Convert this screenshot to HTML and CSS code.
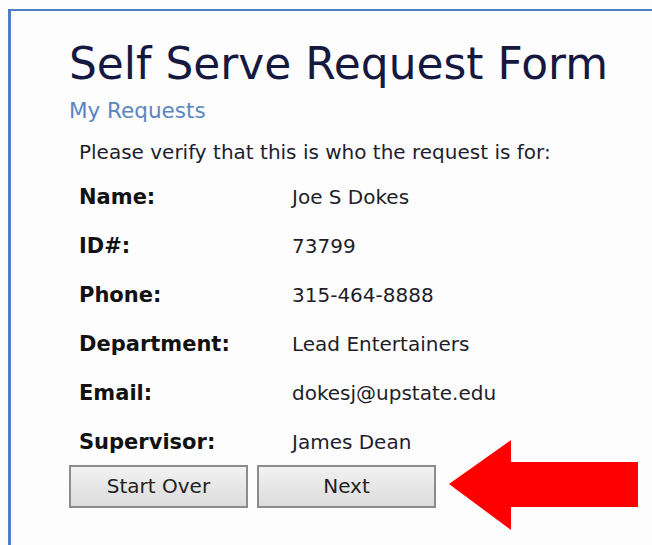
FILE: index.html
```html
<!DOCTYPE html>
<html lang="en">
<head>
<meta charset="utf-8">
<title>Self Serve Request Form</title>
<link rel="stylesheet" href="styles.css">
</head>
<body>
<div class="frame">
  <div class="content">
    <h1 class="title">Self Serve Request Form</h1>
    <a class="link" href="#">My Requests</a>
    <p class="intro">Please verify that this is who the request is for:</p>
    <dl class="details">
      <dt>Name:</dt><dd>Joe S Dokes</dd>
      <dt>ID#:</dt><dd>73799</dd>
      <dt>Phone:</dt><dd>315-464-8888</dd>
      <dt>Department:</dt><dd>Lead Entertainers</dd>
      <dt>Email:</dt><dd>dokesj@upstate.edu</dd>
      <dt>Supervisor:</dt><dd>James Dean</dd>
    </dl>
    <div class="actions">
      <button class="btn" type="button">Start Over</button>
      <button class="btn" type="button">Next</button>
    </div>
  </div>
  <svg class="arrow" width="200" height="100" viewBox="0 0 200 100" aria-hidden="true">
    <polygon points="0,44 62,0 62,22 189,22 189,67 62,67 62,90" fill="#ff0000"/>
  </svg>
</div>
</body>
</html>
```

FILE: styles.css
```css
html, body {
  margin: 0;
  padding: 0;
  background: #fdfdfd;
}

body {
  font-family: "DejaVu Sans", Verdana, sans-serif;
  color: #1c1c2a;
  height: 545px;
  overflow: hidden;
}

.frame {
  position: relative;
  margin: 9px 0 0 8px;
  border-top: 2px solid #4d7fc2;
  border-left: 3px solid #4d7fc2;
  height: 560px;
}

.content {
  padding: 27px 0 0 58px;
}

.title {
  margin: 0;
  font-weight: normal;
  font-size: 43.9px;
  line-height: 52px;
  color: #16193f;
}

.link {
  display: block;
  margin-top: 8px;
  font-size: 21.5px;
  line-height: 26px;
  color: #5a86c0;
  text-decoration: none;
}

.intro {
  margin: 16px 0 0 10px;
  font-size: 20px;
  line-height: 24px;
  color: #1e1e30;
}

.details {
  display: grid;
  grid-template-columns: 213px auto;
  grid-auto-rows: 49px;
  align-items: center;
  margin: 8.5px 0 0 10px;
}

.details dt {
  font-weight: bold;
  font-size: 21px;
  color: #121212;
}

.details dd {
  margin: 0;
  font-size: 20px;
  color: #1e1e2a;
}

.actions {
  display: flex;
  gap: 9px;
  margin-top: -2px;
}

.btn {
  width: 179px;
  height: 43px;
  font-family: "DejaVu Sans", Verdana, sans-serif;
  font-size: 20px;
  color: #222;
  background: linear-gradient(#f2f2f2, #dcdcdc);
  border: 2px solid #8c8c8c;
  border-radius: 0;
  padding: 0;
}

.arrow {
  position: absolute;
  left: 438px;
  top: 429px;
}
```
